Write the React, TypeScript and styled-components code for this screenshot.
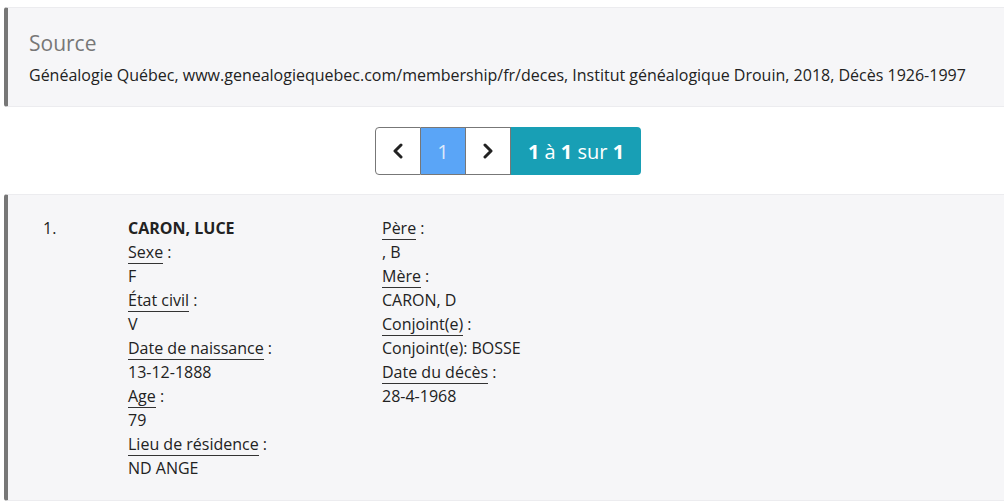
import styled, { createGlobalStyle } from 'styled-components'

const GlobalStyle = createGlobalStyle`
	body {
		margin: 0;
		overflow: hidden;
		background: #fff;
		font-family: 'Open Sans', 'Liberation Sans', sans-serif;
		color: #222;
	}
`

const Page = styled.div`
	width: 1008px;
	padding: 7px 0 0 4px;
`

const Card = styled.section<{ $top?: number; $bottom?: number }>`
	background: #f6f6f8;
	border-top: 1px solid #ececef;
	border-bottom: 1px solid #ececef;
	border-left: 4px solid #777;
	border-radius: 3px 0 0 3px;
	padding: ${p => p.$top ?? 20}px 20px ${p => p.$bottom ?? 19}px 21px;
`

const SourceTitle = styled.h3`
	margin: 0 0 5px;
	font-size: 21px;
	font-weight: 400;
	line-height: 30px;
	color: #777;
`

const SourceText = styled.p`
	margin: 0;
	font-size: 16px;
	line-height: 24px;
	color: #222;
`

const PagerRow = styled.nav`
	display: flex;
	justify-content: center;
	padding: 20px 0 19px;
`

const PageButton = styled.button<{ $active?: boolean; $first?: boolean }>`
	width: ${p => (p.$first ? 46 : 45)}px;
	height: 48px;
	display: flex;
	align-items: center;
	justify-content: center;
	border: 1px solid #777;
	border-left: ${p => (p.$first ? '1px solid #777' : 'none')};
	border-radius: ${p => (p.$first ? '4px 0 0 4px' : '0')};
	background: ${p => (p.$active ? '#5aa5f7' : '#fff')};
	color: ${p => (p.$active ? '#dce9fb' : '#222')};
	font-family: inherit;
	font-size: 20px;
	padding: 0;
`

const PageInfo = styled.div`
	width: 130px;
	height: 48px;
	display: flex;
	align-items: center;
	justify-content: center;
	background: #189fb5;
	color: #fff;
	font-size: 20px;
	border-radius: 0 4px 4px 0;
	b {
		font-weight: 700;
	}
`

const Record = styled.div`
	display: grid;
	grid-template-columns: 85px 254px 254px;
	padding-left: 14px;
	font-size: 16px;
	line-height: 24px;
	color: #222;
`

const Num = styled.div``

const Column = styled.dl`
	margin: 0;
	dt,
	dd {
		margin: 0;
	}
`

const Name = styled.div`
	font-weight: 700;
`

const Label = styled.span`
	border-bottom: 1px solid #333;
`

const Chevron = ({ dir }: { dir: 'left' | 'right' }) => (
	<svg width='14' height='16' viewBox='0 0 14 16'>
		<path
			d={dir === 'left' ? 'M10 2 L4 8 L10 14' : 'M4 2 L10 8 L4 14'}
			fill='none'
			stroke='#222'
			strokeWidth='3'
			strokeLinecap='round'
			strokeLinejoin='round'
		/>
	</svg>
)

type Field = { label: string; value: string }

const left: Field[] = [
	{ label: 'Sexe', value: 'F' },
	{ label: 'État civil', value: 'V' },
	{ label: 'Date de naissance', value: '13-12-1888' },
	{ label: 'Age', value: '79' },
	{ label: 'Lieu de résidence', value: 'ND ANGE' },
]

const right: Field[] = [
	{ label: 'Père', value: ', B' },
	{ label: 'Mère', value: 'CARON, D' },
	{ label: 'Conjoint(e)', value: 'Conjoint(e): BOSSE' },
	{ label: 'Date du décès', value: '28-4-1968' },
]

const Fields = ({ items }: { items: Field[] }) => (
	<>
		{items.map(f => (
			<div key={f.label}>
				<dt>
					<Label>{f.label}</Label> :
				</dt>
				<dd>{f.value}</dd>
			</div>
		))}
	</>
)

const App = () => {
	return (
		<Page>
			<GlobalStyle />
			<Card>
				<SourceTitle>Source</SourceTitle>
				<SourceText>
					Généalogie Québec, www.genealogiequebec.com/membership/fr/deces, Institut
					généalogique Drouin, 2018, Décès 1926-1997
				</SourceText>
			</Card>
			<PagerRow>
				<PageButton $first>
					<Chevron dir='left' />
				</PageButton>
				<PageButton $active>1</PageButton>
				<PageButton>
					<Chevron dir='right' />
				</PageButton>
				<PageInfo>
					<span>
						<b>1</b> à <b>1</b> sur <b>1</b>
					</span>
				</PageInfo>
			</PagerRow>
			<Card $top={21} $bottom={20}>
				<Record>
					<Num>1.</Num>
					<Column>
						<Name>CARON, LUCE</Name>
						<Fields items={left} />
					</Column>
					<Column>
						<Fields items={right} />
					</Column>
				</Record>
			</Card>
		</Page>
	)
}

export default App
